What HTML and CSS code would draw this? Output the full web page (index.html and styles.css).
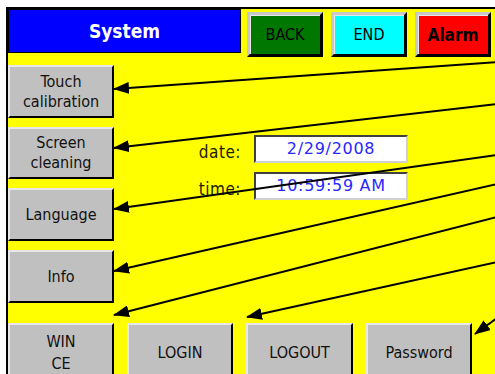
FILE: index.html
```html
<!DOCTYPE html>
<html>
<head>
    <title>System</title>
    <meta charset="UTF-8">
    <link rel="stylesheet" href="styles.css">
</head>

<body>
    <div class="screen">
        <div class="topbar">
            <div class="title">System</div>
            <div class="key back">BACK</div>
            <div class="key end">END</div>
            <div class="key alarm">Alarm</div>
        </div>

        <div class="main">
            <div class="side">
                <div class="btn">Touch<br>calibration</div>
                <div class="btn short">Screen<br>cleaning</div>
                <div class="btn">Language</div>
                <div class="btn">Info</div>
            </div>

            <div class="clock">
                <span class="label">date:</span>
                <div class="field">2/29/2008</div>
                <span class="label">time:</span>
                <div class="field">10:59:59 AM</div>
            </div>
        </div>

        <div class="bottom">
            <div class="btn">WIN<br>CE</div>
            <div class="btn">LOGIN</div>
            <div class="btn wide">LOGOUT</div>
            <div class="btn">Password</div>
        </div>
    </div>

    <!-- pointer arrows drawn over the screen -->
    <svg class="arrows" width="495" height="374" viewBox="0 0 495 374">
        <defs>
            <marker id="head" markerUnits="userSpaceOnUse" markerWidth="16" markerHeight="12" refX="15" refY="6" orient="auto">
                <path d="M0,0 L16,6 L0,12 z" fill="#000"/>
            </marker>
        </defs>
        <g stroke="#000" stroke-width="2" marker-end="url(#head)">
            <line x1="497" y1="62" x2="114" y2="89"/>
            <line x1="497" y1="104" x2="114" y2="148"/>
            <line x1="497" y1="155" x2="114" y2="209"/>
            <line x1="497" y1="184" x2="114" y2="271"/>
            <line x1="497" y1="217" x2="114" y2="315"/>
            <line x1="497" y1="262" x2="247" y2="317"/>
            <line x1="497" y1="318" x2="475" y2="334"/>
        </g>
    </svg>
</body>
</html>
```

FILE: styles.css
```css
body {
    margin: 0;
    background-color: #fff;
    font-family: "DejaVu Sans Condensed", "DejaVu Sans", sans-serif;
    position: relative;
    height: 374px;
    overflow: hidden;
}

.screen {
    margin: 7px 0 0 6px;
    border-top: 2px solid #000;
    border-left: 2px solid #000;
    background-color: #ffff00;
    height: 400px;
}

.topbar {
    display: flex;
    align-items: flex-start;
}

.title {
    width: 231px;
    height: 42px;
    border: 1px solid #000;
    background-color: #0000ff;
    color: #fff;
    font-size: 19px;
    font-weight: bold;
    display: flex;
    align-items: center;
    justify-content: center;
}

.key {
    width: 70px;
    height: 39px;
    margin-top: 3px;
    margin-left: 8px;
    border: 3px solid #c8c8c8;
    border-right-color: #000;
    border-bottom-color: #000;
    box-shadow: inset 1px 1px 0 #e8e8e8;
    font-size: 16px;
    color: #000;
    display: flex;
    align-items: center;
    justify-content: center;
}

.topbar .back {
    margin-left: 6px;
    background-color: #007800;
}

.end {
    background-color: #00ffff;
}

.alarm {
    background-color: #ff0000;
    font-weight: bold;
    font-size: 17px;
}

.main {
    display: flex;
}

.side {
    display: flex;
    flex-direction: column;
    gap: 9px;
    margin-top: 8px;
}

.btn {
    width: 102px;
    height: 49px;
    border: 2px solid #000;
    border-top-color: #e8e8e8;
    border-left-color: #e8e8e8;
    background-color: #c0c0c0;
    color: #111;
    font-size: 16px;
    line-height: 20px;
    text-align: center;
    display: flex;
    align-items: center;
    justify-content: center;
}

.short {
    height: 48px;
}

.clock {
    display: grid;
    grid-template-columns: 48px 154px;
    column-gap: 13px;
    row-gap: 9px;
    align-items: center;
    margin: 78px 0 0 79px;
    align-self: flex-start;
}

.label {
    text-align: right;
    font-size: 17px;
    letter-spacing: 0.5px;
    color: #202000;
    padding-top: 5px;
}

.field {
    height: 24px;
    border: 2px solid #d0d0d0;
    border-top-color: #404040;
    border-left-color: #404040;
    background-color: #fff;
    color: #2828ff;
    font-family: "DejaVu Sans", sans-serif;
    font-size: 16px;
    letter-spacing: 0.7px;
    text-align: center;
    line-height: 24px;
}

.bottom {
    display: flex;
    gap: 13px;
    margin-top: 20px;
}

.bottom .btn {
    height: 56px;
    line-height: 22px;
}

.bottom .btn.wide {
    width: 103px;
}

.arrows {
    position: absolute;
    top: 0;
    left: 0;
}
```
